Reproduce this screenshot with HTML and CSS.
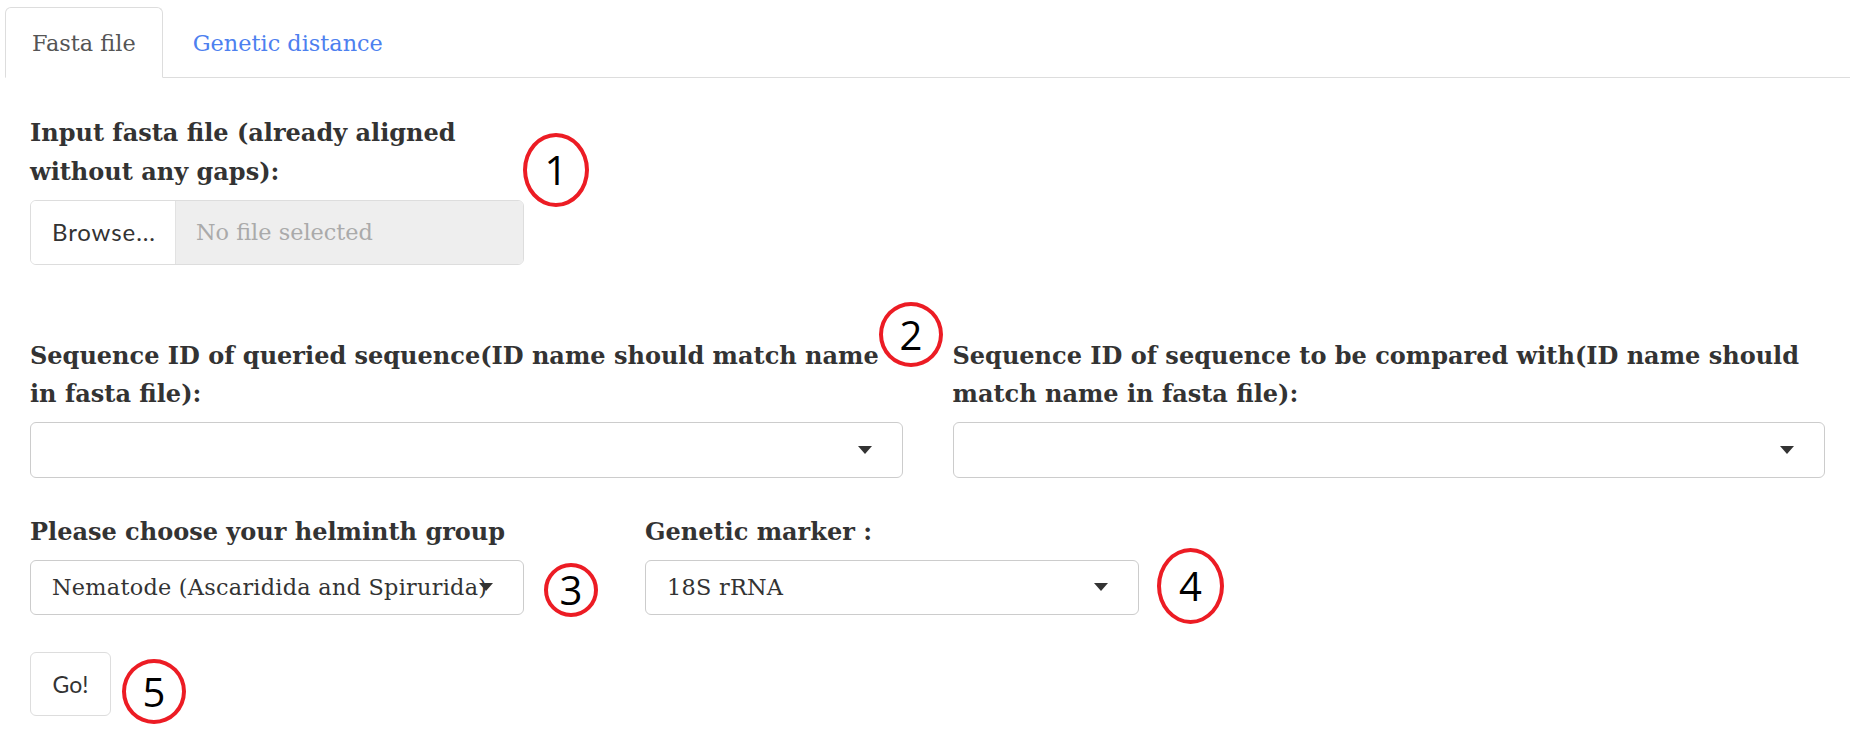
FILE: index.html
```html
<!DOCTYPE html>
<html lang="en">
<head>
<meta charset="utf-8">
<title>Fasta file</title>
<link rel="stylesheet" href="styles.css">
</head>
<body>
<div class="page">
  <ul class="tabs">
    <li class="tab active"><span class="tab-link">Fasta file</span></li>
    <li class="tab"><span class="tab-link link">Genetic distance</span></li>
  </ul>
  <div class="content">
    <div class="group group-file">
      <label class="lbl">Input fasta file (already aligned without any gaps):</label>
      <div class="file">
        <span class="browse">Browse...</span>
        <span class="fname">No file selected</span>
      </div>
    </div>

    <div class="row-two">
      <div class="group">
        <label class="lbl">Sequence ID of queried sequence(ID name should match name in fasta file):</label>
        <div class="select"></div>
      </div>
      <div class="group">
        <label class="lbl">Sequence ID of sequence to be compared with(ID name should match name in fasta file):</label>
        <div class="select"></div>
      </div>
    </div>

    <div class="row-three">
      <div class="group narrow">
        <label class="lbl">Please choose your helminth group</label>
        <div class="select"><span class="sel-text">Nematode (Ascaridida and Spirurida)</span></div>
      </div>
      <div class="group narrow">
        <label class="lbl">Genetic marker :</label>
        <div class="select"><span class="sel-text">18S rRNA</span></div>
      </div>
    </div>

    <button class="go">Go!</button>
  </div>

  <div class="mark m1">1</div>
  <div class="mark m2">2</div>
  <div class="mark m3">3</div>
  <div class="mark m4">4</div>
  <div class="mark m5">5</div>
</div>
</body>
</html>
```

FILE: styles.css
```css
* { box-sizing: border-box; }

html, body {
  margin: 0;
  padding: 0;
  background: #ffffff;
}

body {
  font-family: "DejaVu Serif", "Liberation Serif", serif;
  font-size: 22.4px;
  line-height: 38.5px;
  color: #333333;
}

.page {
  position: relative;
  width: 1863px;
  height: 745px;
  padding: 7px 13px 0 5px;
}

/* Tabs */
.tabs {
  list-style: none;
  margin: 0;
  padding: 0;
  display: flex;
  border-bottom: 1px solid #dddddd;
}

.tab {
  margin-right: 3px;
  margin-bottom: -1px;
  border: 1px solid transparent;
  border-radius: 6px 6px 0 0;
  height: 71px;
  padding: 16px 26px 0 26px;
}

.tab.active {
  border-color: #dddddd;
  border-bottom-color: #ffffff;
  background: #ffffff;
  color: #555555;
}

.tab-link.link {
  color: #4d80ef;
}

/* Content */
.content {
  padding: 36px 25px 0 25px;
}

.group {
  display: flex;
  flex-direction: column;
}

.lbl {
  display: block;
  font-weight: bold;
  font-size: 24px;
  line-height: 38.5px;
  margin-bottom: 8.5px;
  color: #333333;
}

.group-file {
  width: 494px;
}

.file {
  display: flex;
  height: 65px;
  border: 1px solid #dddddd;
  border-radius: 6px;
  overflow: hidden;
}

.browse {
  width: 145px;
  flex: none;
  display: flex;
  align-items: center;
  padding-left: 21px;
  background: #ffffff;
  border-right: 1px solid #e2e2e2;
  font-family: Lato, "Open Sans", sans-serif;
  font-size: 24px;
  letter-spacing: 0.9px;
  color: #333333;
}

.fname {
  flex: 1;
  display: flex;
  align-items: center;
  padding-left: 20px;
  background: #eeeeee;
  color: #aaaaaa;
}

.row-two {
  display: grid;
  grid-template-columns: 1fr 1fr;
  column-gap: 50px;
  margin-top: 72px;
}

.select {
  position: relative;
  height: 56px;
  border: 1px solid #cccccc;
  border-radius: 6px;
  background: #ffffff;
  display: flex;
  align-items: center;
  padding-left: 21px;
  overflow: hidden;
  white-space: nowrap;
}

.select::after {
  content: "";
  position: absolute;
  right: 30px;
  top: 50%;
  margin-top: -4px;
  border-top: 8px solid #333333;
  border-left: 7px solid transparent;
  border-right: 7px solid transparent;
}

.sel-text {
  color: #333333;
  letter-spacing: 0.25px;
}

.row-three {
  display: flex;
  gap: 121px;
  margin-top: 34.5px;
}

.narrow {
  width: 494px;
}

.row-three .select {
  height: 55px;
}

.go {
  display: block;
  margin-top: 37px;
  width: 81px;
  height: 64px;
  padding: 0;
  border: 1px solid #dddddd;
  border-radius: 6px;
  background: #ffffff;
  font-family: Lato, "Open Sans", sans-serif;
  font-size: 23px;
  color: #333333;
}

/* Annotation marks */
.mark {
  position: absolute;
  border: 4px solid #ec1c24;
  border-radius: 50%;
  display: flex;
  align-items: center;
  justify-content: center;
  font-family: "Open Sans", "Liberation Sans", sans-serif;
  font-size: 40px;
  line-height: 1;
  color: #000000;
  background: transparent;
}

.m1 { left: 523px; top: 133px; width: 66px; height: 74px; }
.m2 { left: 879px; top: 302px; width: 64px; height: 65px; }
.m3 { left: 544px; top: 563px; width: 54px; height: 54px; }
.m4 { left: 1157px; top: 548px; width: 67px; height: 76px; }
.m5 { left: 122px; top: 659px; width: 64px; height: 65px; }
```
